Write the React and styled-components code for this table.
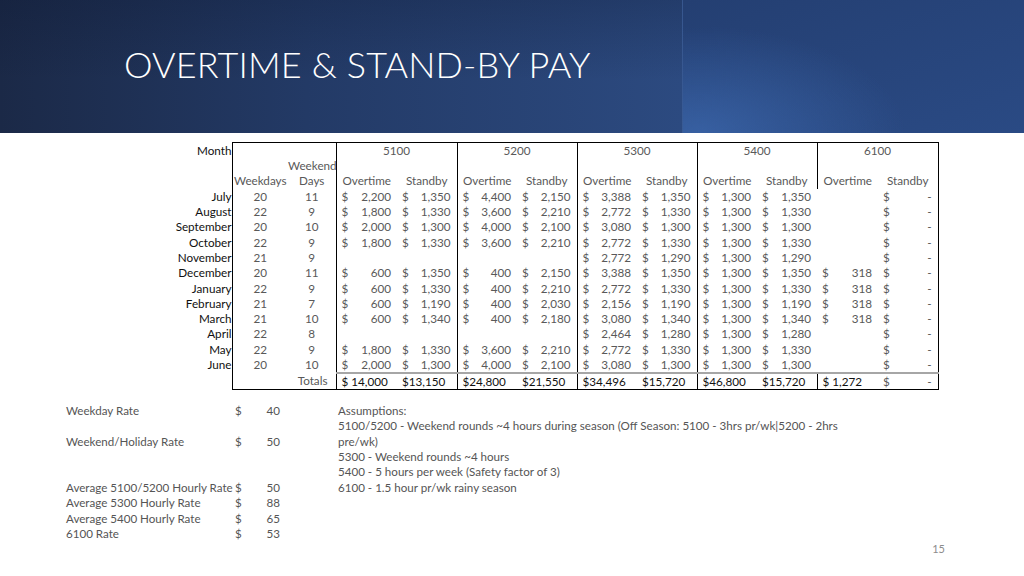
import React from 'react'
import styled, { createGlobalStyle } from 'styled-components'

const GlobalStyle = createGlobalStyle`
  body {
    margin: 0;
    background: #fff;
    font-family: Lato, "Open Sans", "Liberation Sans", sans-serif;
  }
`

const Slide = styled.div`
  width: 1024px;
  min-height: 576px;
  display: flex;
  flex-direction: column;
  background: #fff;
`

const Banner = styled.header`
  height: 133px;
  display: flex;
`

const TitleArea = styled.div`
  flex: 0 0 682px;
  padding: 42px 0 0 124px;
  box-sizing: border-box;
  background:
    linear-gradient(180deg, rgba(10, 20, 45, 0.25) 0%, rgba(10, 20, 45, 0) 60%),
    linear-gradient(90deg, #1b2947 0%, #233a66 45%, #2c4a80 100%);
`

const Title = styled.h1`
  margin: 0;
  font-family: Lato, "Open Sans", sans-serif;
  font-weight: 300;
  font-size: 36px;
  line-height: 44px;
  color: #fff;
  letter-spacing: 0.1px;
`

const SidePanel = styled.div`
  flex: 1;
  border-left: 1px solid rgba(120, 160, 220, 0.2);
  background:
    radial-gradient(ellipse 60% 80% at 5% 100%, rgba(58, 100, 168, 0.85) 0%, rgba(58, 100, 168, 0) 100%),
    linear-gradient(160deg, #243f72 0%, #2a4a84 100%);
`

const Sheet = styled.table`
  border-collapse: collapse;
  table-layout: fixed;
  width: 788px;
  margin: 9px 0 0 150px;
  font-size: 11.7px;
  color: #595959;

  tr {
    height: 15.3px;
  }
`

const Cell = styled.td`
  padding: 0 ${p => (p.$pad ? '8px' : '0')} 0 0;
  line-height: 15px;
  white-space: nowrap;
  text-align: ${p => p.$align || 'center'};
  color: ${p => (p.$strong ? '#111' : 'inherit')};
  border-left: ${p => (p.$edge ? '1px solid #000' : 'none')};
  border-right: ${p => (p.$end ? '1px solid #000' : 'none')};
  border-top: ${p => (p.$top ? '1px solid #000' : p.$rule ? '2px solid #a6a6a6' : 'none')};
  border-bottom: ${p => (p.$bottom ? '1px solid #000' : 'none')};
`

const Label = styled.td`
  padding: 0;
  line-height: 15px;
  text-align: right;
  color: #111;
  white-space: nowrap;
`

const Money = styled.div`
  display: flex;
  justify-content: space-between;
  padding: 0 6px 0 5px;
`

const Total = styled.div`
  text-align: left;
  padding-left: 5px;
`

const Footer = styled.section`
  display: flex;
  margin: 13px 0 0 66px;
  font-size: 11.6px;
  line-height: 15.4px;
  color: #555;
  white-space: nowrap;
`

const Rates = styled.div`
  display: grid;
  grid-template-columns: 169px 12px 33px;
  grid-auto-rows: 15.4px;
`

const RateValue = styled.span`
  text-align: right;
`

const Notes = styled.div`
  margin-left: 58px;
  display: flex;
  flex-direction: column;
`

const PageNo = styled.div`
  margin-top: auto;
  padding: 0 79px 20px 0;
  text-align: right;
  font-size: 11px;
  line-height: 14px;
  color: #8c8c8c;
`

const months = [
  ['July', 20, 11],
  ['August', 22, 9],
  ['September', 20, 10],
  ['October', 22, 9],
  ['November', 21, 9],
  ['December', 20, 11],
  ['January', 22, 9],
  ['February', 21, 7],
  ['March', 21, 10],
  ['April', 22, 8],
  ['May', 22, 9],
  ['June', 20, 10],
]

const blocks = [
  {
    code: '5100',
    ot: ['2,200', '1,800', '2,000', '1,800', null, '600', '600', '600', '600', null, '1,800', '2,000'],
    sb: ['1,350', '1,330', '1,300', '1,330', null, '1,350', '1,330', '1,190', '1,340', null, '1,330', '1,300'],
    tot: ['$ 14,000', '$13,150'],
  },
  {
    code: '5200',
    ot: ['4,400', '3,600', '4,000', '3,600', null, '400', '400', '400', '400', null, '3,600', '4,000'],
    sb: ['2,150', '2,210', '2,100', '2,210', null, '2,150', '2,210', '2,030', '2,180', null, '2,210', '2,100'],
    tot: ['$24,800', '$21,550'],
  },
  {
    code: '5300',
    ot: ['3,388', '2,772', '3,080', '2,772', '2,772', '3,388', '2,772', '2,156', '3,080', '2,464', '2,772', '3,080'],
    sb: ['1,350', '1,330', '1,300', '1,330', '1,290', '1,350', '1,330', '1,190', '1,340', '1,280', '1,330', '1,300'],
    tot: ['$34,496', '$15,720'],
  },
  {
    code: '5400',
    ot: Array(12).fill('1,300'),
    sb: ['1,350', '1,330', '1,300', '1,330', '1,290', '1,350', '1,330', '1,190', '1,340', '1,280', '1,330', '1,300'],
    tot: ['$46,800', '$15,720'],
  },
  {
    code: '6100',
    ot: [null, null, null, null, null, '318', '318', '318', '318', null, null, null],
    sb: Array(12).fill('-'),
    tot: ['$ 1,272', null],
  },
]

const rates = [
  ['Weekday Rate', '40'],
  null,
  ['Weekend/Holiday Rate', '50'],
  null,
  null,
  ['Average 5100/5200 Hourly Rate', '50'],
  ['Average 5300 Hourly Rate', '88'],
  ['Average 5400 Hourly Rate', '65'],
  ['6100 Rate', '53'],
]

const notes = [
  'Assumptions:',
  '5100/5200 - Weekend rounds ~4 hours during season (Off Season: 5100 - 3hrs pr/wk|5200 - 2hrs',
  'pre/wk)',
  '5300 - Weekend rounds ~4 hours',
  '5400 - 5 hours per week (Safety factor of 3)',
  '6100 - 1.5 hour pr/wk rainy season',
]

function Dollar({ value }) {
  if (!value) return null
  return (
    <Money>
      <span>$</span>
      <span>{value}</span>
    </Money>
  )
}

export default function App() {
  const last = blocks.length - 1

  return (
    <>
      <GlobalStyle />
      <Slide>
        <Banner>
          <TitleArea>
            <Title>OVERTIME &amp; STAND-BY PAY</Title>
          </TitleArea>
          <SidePanel />
        </Banner>

        <Sheet>
          <colgroup>
            <col style={{ width: 82 }} />
            <col style={{ width: 56 }} />
            <col style={{ width: 48 }} />
            {blocks.map((b, i) => (
              <React.Fragment key={b.code}>
                <col style={{ width: i === 0 || i === last ? 61 : 60 }} />
                <col style={{ width: 60 }} />
              </React.Fragment>
            ))}
          </colgroup>
          <tbody>
            <tr>
              <Label>Month</Label>
              <Cell $edge $top />
              <Cell $top />
              {blocks.map((b, i) => (
                <Cell key={b.code} colSpan={2} $edge $top $end={i === last}>
                  {b.code}
                </Cell>
              ))}
            </tr>
            <tr>
              <Label />
              <Cell $edge />
              <Cell>Weekend</Cell>
              {blocks.map((b, i) => (
                <React.Fragment key={b.code}>
                  <Cell $edge />
                  <Cell $end={i === last} />
                </React.Fragment>
              ))}
            </tr>
            <tr>
              <Label />
              <Cell $edge>Weekdays</Cell>
              <Cell>Days</Cell>
              {blocks.map((b, i) => (
                <React.Fragment key={b.code}>
                  <Cell $edge>Overtime</Cell>
                  <Cell $end={i === last}>Standby</Cell>
                </React.Fragment>
              ))}
            </tr>
            {months.map(([name, wd, we], r) => (
              <tr key={name}>
                <Label>{name}</Label>
                <Cell $edge>{wd}</Cell>
                <Cell>{we}</Cell>
                {blocks.map((b, i) => (
                  <React.Fragment key={b.code}>
                    <Cell $edge={i !== last}>
                      <Dollar value={b.ot[r]} />
                    </Cell>
                    <Cell $end={i === last}>
                      <Dollar value={b.sb[r]} />
                    </Cell>
                  </React.Fragment>
                ))}
              </tr>
            ))}
            <tr>
              <Label />
              <Cell $edge $bottom />
              <Cell $bottom $align="right" $pad>Totals</Cell>
              {blocks.map((b, i) => (
                <React.Fragment key={b.code}>
                  <Cell $edge $rule $bottom $strong>
                    <Total>{b.tot[0]}</Total>
                  </Cell>
                  <Cell $rule $bottom $end={i === last} $strong={!!b.tot[1]}>
                    {b.tot[1] ? <Total>{b.tot[1]}</Total> : <Dollar value="-" />}
                  </Cell>
                </React.Fragment>
              ))}
            </tr>
          </tbody>
        </Sheet>

        <Footer>
          <Rates>
            {rates.map((row, i) =>
              row ? (
                <React.Fragment key={i}>
                  <span>{row[0]}</span>
                  <span>$</span>
                  <RateValue>{row[1]}</RateValue>
                </React.Fragment>
              ) : (
                <React.Fragment key={i}>
                  <span />
                  <span />
                  <span />
                </React.Fragment>
              )
            )}
          </Rates>
          <Notes>
            {notes.map(line => (
              <span key={line}>{line}</span>
            ))}
          </Notes>
        </Footer>

        <PageNo>15</PageNo>
      </Slide>
    </>
  )
}
